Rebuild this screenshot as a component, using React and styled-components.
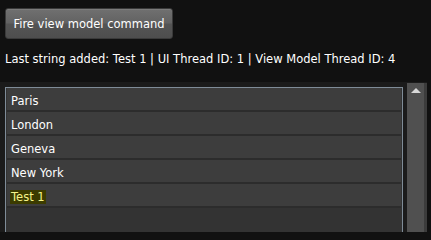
import React from 'react';
import styled, { createGlobalStyle } from 'styled-components';

const cities = ['Paris', 'London', 'Geneva', 'New York'];
const lastAdded = 'Test 1';

const GlobalStyle = createGlobalStyle`
    html, body {
        margin: 0;
        padding: 0;
        background: #111111;
    }

    body {
        font-family: "DejaVu Sans", "Liberation Sans", sans-serif;
        color: #ffffff;
    }
`;

const Page = styled.div`
    width: 431px;
    height: 240px;
    padding-top: 8px;
    box-sizing: border-box;
    display: flex;
    flex-direction: column;
    overflow: hidden;
`;

const CommandButton = styled.button`
    margin-left: 5px;
    width: 168px;
    height: 31px;
    padding: 0;
    border: 1px solid #3a3a3a;
    border-radius: 3px;
    background: linear-gradient(to bottom, #707070 0%, #626262 48%, #545454 52%, #4e4e4e 100%);
    box-shadow: inset 0 1px 0 #7c7c7c;
    color: #ffffff;
    font-family: inherit;
    font-size: 11.5px;
    cursor: pointer;
`;

const StatusLine = styled.div`
    margin: 12px 0 0 5px;
    height: 16px;
    line-height: 16px;
    font-size: 11.5px;
    white-space: nowrap;
`;

const Panel = styled.div`
    margin-top: 15px;
    width: 427px;
    height: 150px;
    padding-top: 1px;
    box-sizing: border-box;
    background: #1b1b1b;
    display: flex;
    overflow: hidden;
`;

const ListBox = styled.div`
    margin: 4px 0 0 5px;
    width: 398px;
    height: 160px;
    box-sizing: border-box;
    padding: 0 1px;
    border: 1px solid #7f8c98;
    background: #333333;
    display: flex;
    flex-direction: column;
`;

const Row = styled.div`
    height: 19px;
    padding: 3px 0 0 3px;
    border-bottom: 2px solid #2c2c2c;
    background: #3d3d3d;
    display: flex;
    align-items: center;
    font-size: 11.5px;
    color: #ffffff;
`;

const Label = styled.span`
    padding: 0 1px;
    line-height: 14px;
    background: ${props => props.$highlight ? '#3b3b00' : 'transparent'};
    color: ${props => props.$highlight ? '#f4f48a' : '#ffffff'};
`;

const ScrollBar = styled.div`
    margin-left: 4px;
    width: 17px;
    border-right: 3px solid #3c3c3c;
    background: #505050;
    display: flex;
    justify-content: center;
`;

const ScrollArrow = styled.div`
    margin-top: 5px;
    width: 0;
    height: 0;
    border-left: 5px solid transparent;
    border-right: 5px solid transparent;
    border-bottom: 5px solid #d8d8d8;
`;

const App = () => {

    return (
        <Page>
            <GlobalStyle />
            <CommandButton>Fire view model command</CommandButton>
            <StatusLine>
                Last string added: {lastAdded} | UI Thread ID: 1 | View Model Thread ID: 4
            </StatusLine>
            <Panel>
                <ListBox>
                    {cities.map(city => (
                        <Row key={city}>
                            <Label>{city}</Label>
                        </Row>
                    ))}
                    <Row>
                        <Label $highlight>{lastAdded}</Label>
                    </Row>
                </ListBox>
                <ScrollBar>
                    <ScrollArrow />
                </ScrollBar>
            </Panel>
        </Page>
    );
}

export default App;
